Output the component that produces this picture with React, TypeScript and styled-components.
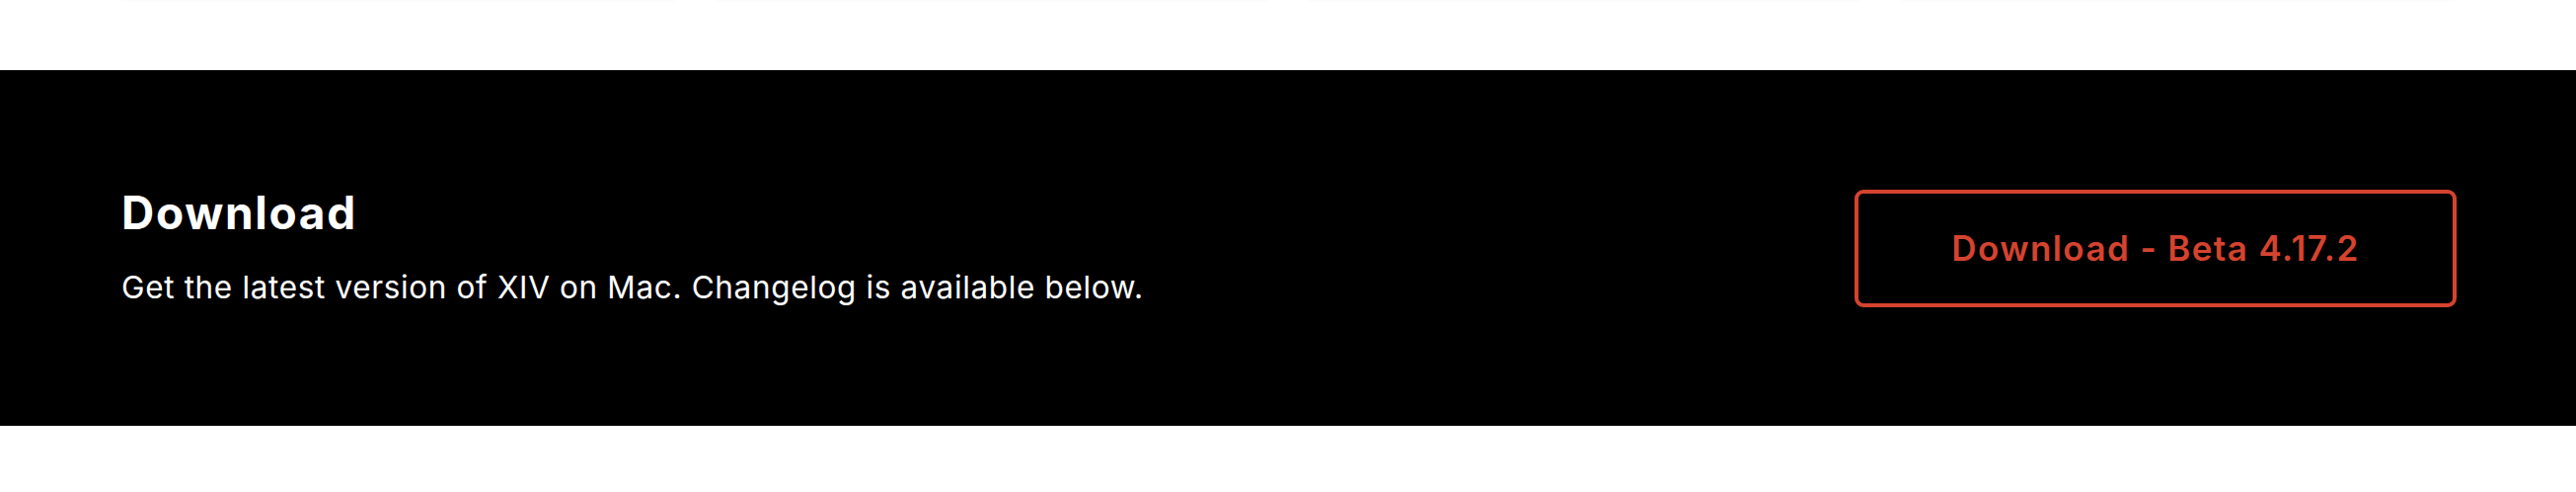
import React from "react";
import styled, { createGlobalStyle } from "styled-components";

const GlobalStyle = createGlobalStyle`
  html, body {
    margin: 0;
    padding: 0;
    background: #ffffff;
  }
  body {
    font-family: Inter, "Noto Sans", "Liberation Sans", sans-serif;
    -webkit-font-smoothing: antialiased;
  }
  * { box-sizing: border-box; }
`;

const Page = styled.div`
  width: 2610px;
  height: 498px;
  background: #ffffff;
  display: flex;
  flex-direction: column;
`;

const CardStrip = styled.div`
  height: 71px;
  display: grid;
  grid-template-columns: repeat(4, 1fr);
  column-gap: 40px;
  padding: 0 123px;
  align-items: start;
`;

const CardEdge = styled.div`
  height: 2px;
  background: #fcfcfc;
  border-radius: 0 0 60px 60px;
  box-shadow: 0 8px 18px rgba(0, 0, 0, 0.02);
`;

const Band = styled.section`
  height: 360px;
  background: #000000;
  display: flex;
  align-items: center;
  justify-content: space-between;
  padding: 0 121px 0 123px;
`;

const TextBlock = styled.div`
  display: flex;
  flex-direction: column;
  padding-bottom: 4px;
`;

const Title = styled.h2`
  margin: 0;
  color: #ffffff;
  font-family: Inter, "Noto Sans", sans-serif;
  font-weight: 700;
  font-size: 46px;
  line-height: 56px;
  letter-spacing: 1.7px;
`;

const Subtitle = styled.p`
  margin: 28px 0 0;
  color: #ffffff;
  font-family: Inter, "Noto Sans", sans-serif;
  font-weight: 400;
  font-size: 31.5px;
  line-height: 40px;
  letter-spacing: 0.65px;
`;

const DownloadButton = styled.a`
  width: 610px;
  height: 119px;
  display: flex;
  align-items: center;
  justify-content: center;
  border: 4px solid #d5432f;
  border-radius: 9px;
  color: #d5432f;
  font-family: Inter, "Noto Sans", sans-serif;
  font-weight: 600;
  font-size: 35px;
  letter-spacing: 1.4px;
  text-decoration: none;
  cursor: pointer;
`;

export default function App() {
  return (
    <>
      <GlobalStyle />
      <Page>
        <CardStrip>
          <CardEdge />
          <CardEdge />
          <CardEdge />
          <CardEdge />
        </CardStrip>
        <Band>
          <TextBlock>
            <Title>Download</Title>
            <Subtitle>
              Get the latest version of XIV on Mac. Changelog is available below.
            </Subtitle>
          </TextBlock>
          <DownloadButton>Download - Beta 4.17.2</DownloadButton>
        </Band>
      </Page>
    </>
  );
}
